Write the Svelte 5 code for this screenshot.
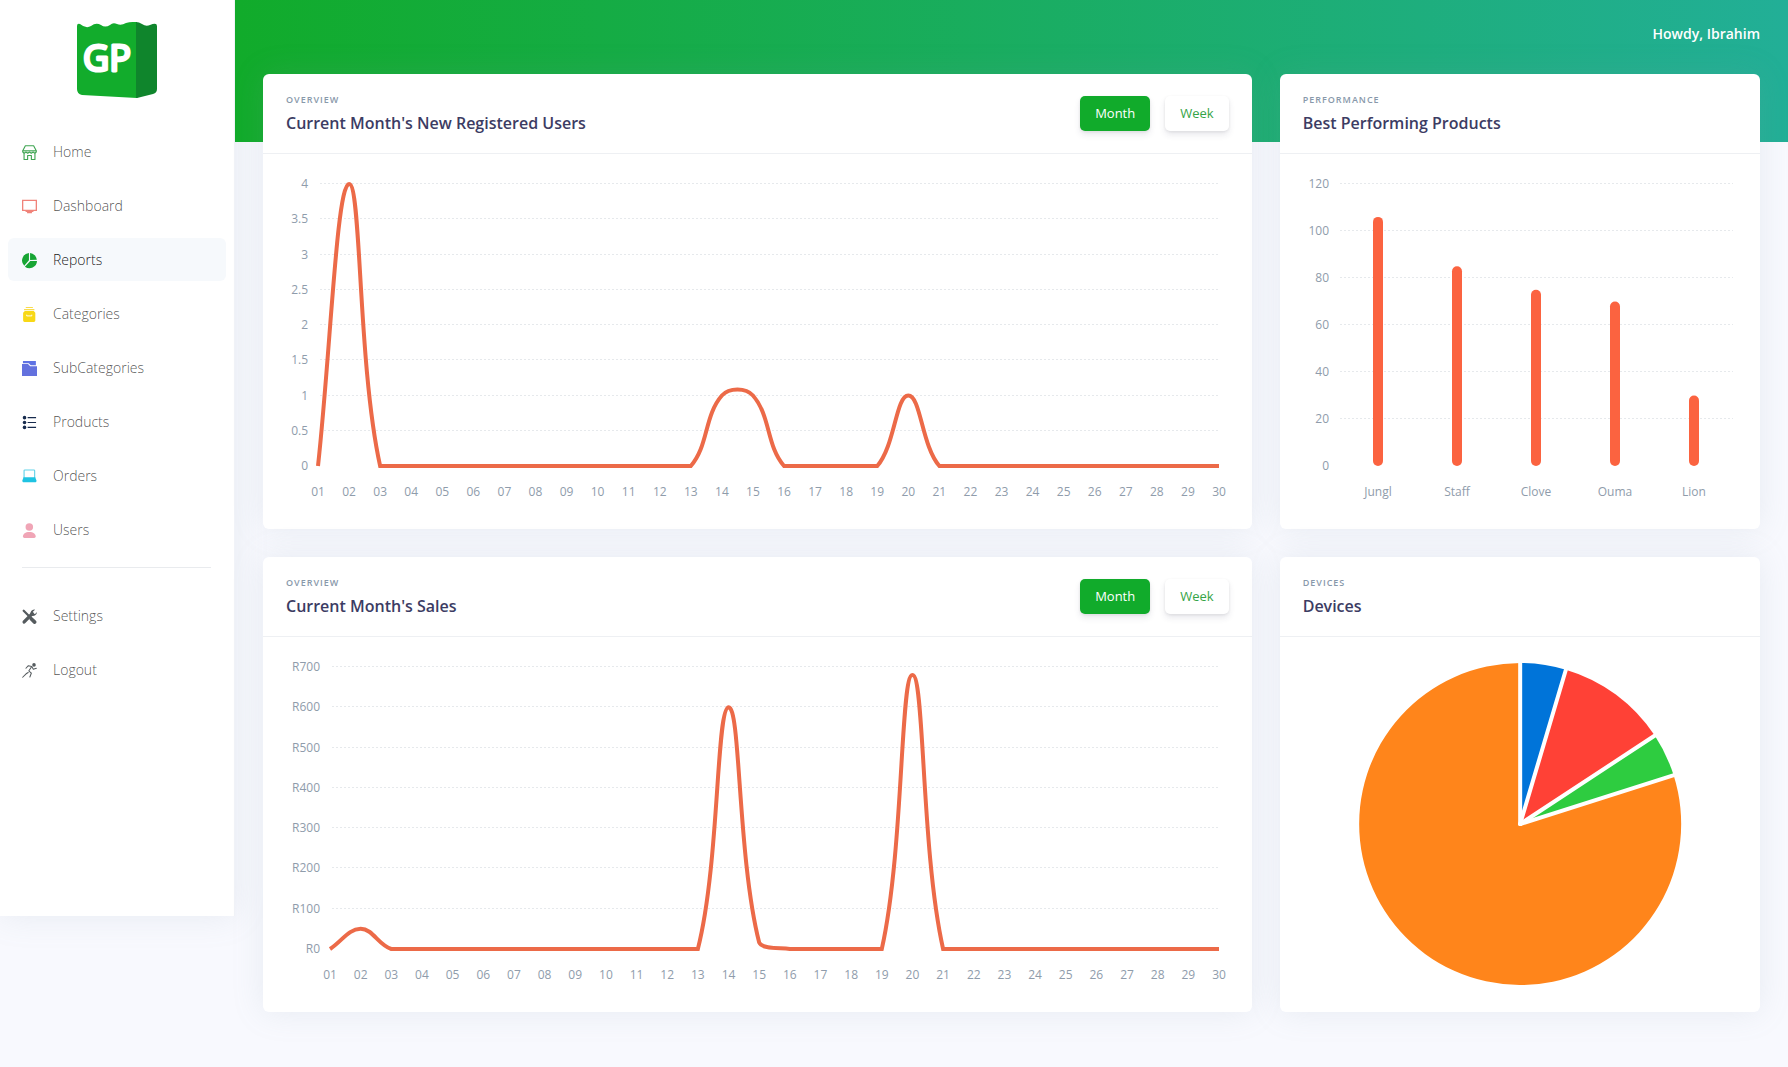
<script>
  const primaryLinks = [
    { label: 'Home', icon: 'shop' },
    { label: 'Dashboard', icon: 'screen' },
    { label: 'Reports', icon: 'pie', active: true },
    { label: 'Categories', icon: 'bag' },
    { label: 'SubCategories', icon: 'folder' },
    { label: 'Products', icon: 'list' },
    { label: 'Orders', icon: 'laptop' },
    { label: 'Users', icon: 'person' }
  ];
  const secondaryLinks = [
    { label: 'Settings', icon: 'tools' },
    { label: 'Logout', icon: 'runner' }
  ];

  const days = Array.from({ length: 30 }, (_, i) => String(i + 1).padStart(2, '0'));
  const series = (entries) => days.map((d) => entries[Number(d)] ?? 0);

  const lineCards = [
    {
      title: "Current Month's New Registered Users",
      values: series({ 2: 4, 14: 1, 15: 1, 20: 1 }),
      ticks: [0, 0.5, 1, 1.5, 2, 2.5, 3, 3.5, 4],
      prefix: '',
      left: 32
    },
    {
      title: "Current Month's Sales",
      values: series({ 2: 50, 14: 600, 15: 16, 20: 680 }),
      ticks: [0, 100, 200, 300, 400, 500, 600, 700],
      prefix: 'R',
      left: 44
    }
  ];

  const products = [
    { name: 'Jungl', value: 106 },
    { name: 'Staff', value: 85 },
    { name: 'Clove', value: 75 },
    { name: 'Ouma', value: 70 },
    { name: 'Lion', value: 30 }
  ];
  const productTicks = [0, 20, 40, 60, 80, 100, 120];

  const devices = [
    { color: '#0074d9', from: 0, to: 16.5 },
    { color: '#ff4136', from: 16.5, to: 56.7 },
    { color: '#2ecc40', from: 56.7, to: 72.4 },
    { color: '#ff851b', from: 72.4, to: 360 }
  ];

  const chartTop = 8;
  const chartBottom = 290;
  let lineWidths = $state([942, 942]);
  let barWidth = $state(434);
  let periods = $state(['Month', 'Month']);

  const scaleY = (value, max) => chartBottom - (value / max) * (chartBottom - chartTop);
  const tickY = (value, max) => Math.round(scaleY(value, max));
  const dayX = (index, left, width) => left + (index * (width - 10 - left)) / (days.length - 1);

  // Smooth cubic path; control points are kept inside the plot area.
  function smoothPath(values, max, left, width) {
    const pts = values.map((v, i) => ({ x: dayX(i, left, width), y: scaleY(v, max) }));
    const clamp = (y) => Math.min(chartBottom, Math.max(chartTop, y));
    const handles = pts.map((p, i) => {
      const a = pts[i - 1] ?? p;
      const b = pts[i + 1] ?? p;
      const da = Math.hypot(p.x - a.x, p.y - a.y);
      const db = Math.hypot(b.x - p.x, b.y - p.y);
      const fa = (0.4 * da) / (da + db);
      const fb = (0.4 * db) / (da + db);
      return {
        inX: p.x - fa * (b.x - a.x),
        inY: clamp(p.y - fa * (b.y - a.y)),
        outX: p.x + fb * (b.x - a.x),
        outY: clamp(p.y + fb * (b.y - a.y))
      };
    });
    return pts
      .map((p, i) =>
        i === 0
          ? `M${p.x} ${p.y}`
          : `C${handles[i - 1].outX} ${handles[i - 1].outY} ${handles[i].inX} ${handles[i].inY} ${p.x} ${p.y}`
      )
      .join('');
  }

  const polar = (deg, r) => {
    const a = (deg * Math.PI) / 180;
    return `${(r * Math.sin(a)).toFixed(2)} ${(-r * Math.cos(a)).toFixed(2)}`;
  };
  const slice = (s) =>
    `M0 0L${polar(s.from, 161)}A161 161 0 ${s.to - s.from > 180 ? 1 : 0} 1 ${polar(s.to, 161)}Z`;
</script>

{#snippet icon(name)}
  <svg class="icon" viewBox="0 0 16 16" aria-hidden="true">
    {#if name === 'shop'}
      <g fill="none" stroke="#3fa552" stroke-width="1.2" stroke-linejoin="round">
        <path d="M3.6.8h8.800l2.800 5.400v1.300l-1.500 1.300-1.900-1.300L9.900 8.800 8 7.500 6.100 8.800 4.200 7.500 2.300 8.800.8 7.500V6.200z" />
        <path d="M.8 6.200h14.400" />
        <path d="M2.200 8.800v6.600H6V11.200h4v4.200h3.800V8.800" />
      </g>
    {:else if name === 'screen'}
      <path d="M.7 1.400h14.600v10.800H.7z" fill="none" stroke="#f0837a" stroke-width="1.4" />
      <path d="M3.800 12.900h8.400v1h-1.600v1.200H5.400v-1.200H3.800z" fill="#f0837a" />
    {:else if name === 'pie'}
      <g fill="#17a534">
        <path d="M16 8.600A8 8 0 0 1 3.100 14.600L8.800 8.600z" />
        <path d="M7.400 0v7.700L2.400 13.600A8 8 0 0 1 7.400 0z" />
        <path d="M8.600 0A8 8 0 0 1 15.900 7.200L8.600 7.400z" />
      </g>
    {:else if name === 'bag'}
      <path d="M4 0h7.600v1H4zM2.200 2h11v1.400h-11z" fill="#f9dc4e" />
      <path d="M3 4.200h9.500L14.200 6v8.500a1.500 1.500 0 0 1-1.500 1.500h-10a1.500 1.500 0 0 1-1.500-1.500V6z" fill="#f8d816" />
      <path d="M5 8.200v1.300h5.400V8.200" fill="none" stroke="#fff" stroke-width="1" />
    {:else if name === 'folder'}
      <path d="M1 0h13.800v4.600H9.300L7.200 2.400H1z" fill="#5e72e4" />
      <path d="M0 3.200h6.400l2.400 2.400H16V16H0z" fill="#6371de" />
    {:else if name === 'list'}
      <g fill="#172b4d">
        <circle cx="2.700" cy="2.800" r="1.900" />
        <circle cx="2.700" cy="8" r="1.900" />
        <circle cx="2.700" cy="13.200" r="1.900" />
        <path d="M6 2.200h9v1.200H6zM6 7.400h9v1.200H6zM6 12.600h9v1.200H6z" />
      </g>
    {:else if name === 'laptop'}
      <path d="M2.200 9.500V1.800q0-.8.8-.8h9.700q.8 0 .8.800v7.700" fill="none" stroke="#62d3ea" stroke-width="1.200" />
      <path d="M1.600 8.800h12.500L15.300 12v1.200q0 .8-.8.800H1.300q-.8 0-.8-.8V12z" fill="#1fc3e2" />
    {:else if name === 'person'}
      <circle cx="7.800" cy="4.200" r="4" fill="#f0a5b6" />
      <path d="M1 14.500c0-3.200 2.600-5 6.800-5s6.800 1.800 6.800 5q0 1.500-1.500 1.500H2.500Q1 16 1 14.500z" fill="#f0a5b6" />
    {:else if name === 'tools'}
      <g fill="none" stroke="#555b5e" stroke-linecap="round">
        <path d="M1.800 1.800l4.800 4.900" stroke-width="2.400" />
        <path d="M9.800 10.400l3.700 3.500" stroke-width="4" />
        <path d="M11 5L2.300 13.800" stroke-width="3.600" />
      </g>
      <path d="M13.900.7L11.600 3l.4 1.900 1.900.4L16 3.200A4.200 4.200 0 0 1 9.300 6.600 4.200 4.200 0 0 1 13.900.7z" fill="#555b5e" />
    {:else}
      <circle cx="12.800" cy="2" r="1.900" fill="#555b5e" />
      <g fill="none" stroke="#555b5e" stroke-width="1.100" stroke-linecap="round" stroke-linejoin="round">
        <path d="M4.200 5.600l2.600-2.700 3.600.8L7.200 8.500l2.800 2.200-1.600 4.200" />
        <path d="M10.400 3.700l1.700 2.900 3.200-.9" />
        <path d="M6.600 10.200l-2.200 1.300L.7 15.200" />
      </g>
    {/if}
  </svg>
{/snippet}

{#snippet navList(links)}
  <ul class="links">
    {#each links as link}
      <li>
        <a href="#{link.label.toLowerCase()}" class:active={link.active} aria-current={link.active ? 'page' : undefined}>
          {@render icon(link.icon)}
          {link.label}
        </a>
      </li>
    {/each}
  </ul>
{/snippet}

{#snippet lineCard(card, n)}
  {@const max = card.ticks[card.ticks.length - 1]}
  {@const width = lineWidths[n]}
  <section class="card wide">
    <header class="card-head">
      <div>
        <h6>Overview</h6>
        <h2>{card.title}</h2>
      </div>
      <div class="periods">
        {#each ['Month', 'Week'] as period}
          <button
            type="button"
            class:selected={periods[n] === period}
            aria-pressed={periods[n] === period}
            onclick={() => (periods[n] = period)}>{period}</button>
        {/each}
      </div>
    </header>
    <div class="card-body">
      <div class="plot" bind:clientWidth={lineWidths[n]}>
        <svg class="chart" role="img" aria-label={card.title}>
          {#each card.ticks as tick}
            {#if tick > 0}
              <line class="grid" x1={card.left + 2} x2={width - 10} y1={tickY(tick, max) - 0.5} y2={tickY(tick, max) - 0.5} />
            {/if}
            <text class="tick end" x={card.left - 10} y={tickY(tick, max) + 4}>{card.prefix}{tick}</text>
          {/each}
          {#each days as day, i}
            <text class="tick middle" x={dayX(i, card.left, width)} y={chartBottom + 30}>{day}</text>
          {/each}
          <path class="line" d={smoothPath(card.values, max, card.left, width)} />
        </svg>
      </div>
    </div>
  </section>
{/snippet}

<div class="app">
  <nav class="sidebar" aria-label="Main">
    <a class="brand" href="#home" aria-label="GP">
      <svg viewBox="0 0 80 76">
        <path d="M0 4Q0 1 3 2Q9 7 14 4Q19 0 24 3Q28 6 33 3Q36 0 40 2Q44 4 49 1Q54-.3 60 0V76L5 73Q0 72 0 67z" fill="#12ac2c" />
        <path d="M59 0Q62 0 65 2Q69 5 73 3Q80 0 80 4V67Q80 71 76 72L62 75.500Q60 76 59 76z" fill="#0f852c" />
        <text x="30" y="49" text-anchor="middle">GP</text>
      </svg>
    </a>
    {@render navList(primaryLinks)}
    <hr />
    {@render navList(secondaryLinks)}
  </nav>

  <main>
    <header class="topbar"><span>Howdy, Ibrahim</span></header>
    <div class="cards">
      {@render lineCard(lineCards[0], 0)}

      <section class="card narrow">
        <header class="card-head">
          <div>
            <h6>Performance</h6>
            <h2>Best Performing Products</h2>
          </div>
        </header>
        <div class="card-body">
          <div class="plot" bind:clientWidth={barWidth}>
            <svg class="chart" role="img" aria-label="Best Performing Products">
              {#each productTicks as tick}
                {#if tick > 0}
                  <line class="grid" x1="37" x2={barWidth - 4} y1={tickY(tick, 120) - 0.5} y2={tickY(tick, 120) - 0.5} />
                {/if}
                <text class="tick end" x="26" y={tickY(tick, 120) + 4}>{tick}</text>
              {/each}
              {#each products as product, i}
                {@const x = Math.round(35 + ((i + 0.5) * (barWidth - 39)) / products.length)}
                <rect class="bar" x={x - 5} y={scaleY(product.value, 120)} width="10" height={chartBottom - scaleY(product.value, 120)} rx="5" />
                <text class="tick middle" {x} y={chartBottom + 30}>{product.name}</text>
              {/each}
            </svg>
          </div>
        </div>
      </section>

      {@render lineCard(lineCards[1], 1)}

      <section class="card narrow">
        <header class="card-head">
          <div>
            <h6>Devices</h6>
            <h2>Devices</h2>
          </div>
        </header>
        <div class="card-body">
          <svg class="chart" viewBox="-165 -165 330 330" role="img" aria-label="Devices">
            {#each devices as device}
              <path d={slice(device)} fill={device.color} />
            {/each}
            {#each devices as device}
              <path class="divider" d="M0 0L{polar(device.from, 163)}" />
            {/each}
          </svg>
        </div>
      </section>
    </div>
  </main>
</div>

<style>
  :global(body) {
    margin: 0;
    background: #f8f9fe;
    font-family: 'Open Sans', 'Noto Sans', sans-serif;
    color: #32325d;
  }

  .app {
    display: flex;
    align-items: flex-start;
    min-height: 100vh;
  }

  .sidebar {
    box-sizing: border-box;
    flex: 0 0 235px;
    min-height: calc(100vh - 151px);
    background: #fff;
    border-right: 1px solid #f1f3f8;
    box-shadow: 0 0 32px rgba(136, 152, 170, 0.15);
  }

  .brand {
    display: block;
    width: 80px;
    margin: 0 auto;
    padding: 22px 0 32px;
  }

  .brand svg {
    display: block;
    width: 80px;
    height: 76px;
  }

  .brand text {
    font-family: 'Open Sans', 'Noto Sans', sans-serif;
    font-size: 36px;
    font-weight: 400;
    fill: #fff;
    stroke: #fff;
    stroke-width: 3px;
    stroke-linejoin: round;
  }

  .links {
    display: flex;
    flex-direction: column;
    gap: 11px;
    margin: 0;
    padding: 0 8px;
    list-style: none;
  }

  .links a {
    display: flex;
    align-items: center;
    gap: 16px;
    height: 43px;
    padding: 0 14px;
    border-radius: 6px;
    font-size: 14px;
    font-weight: 300;
    color: rgba(0, 0, 0, 0.7);
    text-decoration: none;
  }

  .links a.active {
    background: #f6f9fc;
    color: rgba(0, 0, 0, 0.9);
  }

  .icon {
    flex: none;
    width: 15px;
    height: 15px;
    margin-top: 2px;
    overflow: visible;
  }

  hr {
    height: 1px;
    margin: 16px 23px 26px 22px;
    border: 0;
    background: #e9ebee;
  }

  main {
    flex: 1;
    min-width: 0;
    background: linear-gradient(87deg, #11ab2a, #22af97) no-repeat 0 0 / 100% 142px;
  }

  .topbar {
    display: flex;
    justify-content: flex-end;
    padding: 23px 28px 30px;
    font-size: 14px;
    line-height: 21px;
    font-weight: 600;
    color: #fff;
  }

  .cards {
    display: grid;
    grid-template-columns: repeat(12, minmax(0, 1fr));
    gap: 28px;
    padding: 0 28px 55px;
  }

  .card {
    border-radius: 6px;
    background: #fff;
    box-shadow: 0 0 32px rgba(136, 152, 170, 0.15);
  }

  .wide {
    grid-column: span 8;
  }

  .narrow {
    grid-column: span 4;
  }

  .card-head {
    display: flex;
    align-items: center;
    justify-content: space-between;
    box-sizing: border-box;
    height: 80px;
    padding: 0 23px;
    border-bottom: 1px solid #eef0f3;
  }

  h6 {
    margin: 0;
    font-size: 9px;
    line-height: 16px;
    font-weight: 600;
    letter-spacing: 1px;
    text-transform: uppercase;
    color: #8898aa;
  }

  h2 {
    margin: 0;
    padding-top: 3px;
    font-size: 16px;
    line-height: 24px;
    font-weight: 600;
    color: #3c3c63;
  }

  .periods {
    display: flex;
    gap: 15px;
  }

  button {
    height: 35px;
    padding: 0 15px 1px;
    border: 0;
    border-radius: 5px;
    background: #fff;
    box-shadow: 0 4px 6px rgba(50, 50, 93, 0.1), 0 1px 3px rgba(0, 0, 0, 0.08);
    font: 500 13px 'Open Sans', 'Noto Sans', sans-serif;
    color: #35a447;
    cursor: pointer;
  }

  button.selected {
    background: #11ab2b;
    color: #fff;
  }

  .card-body {
    padding: 22px 23px 23px;
  }

  .plot {
    min-width: 0;
  }

  .chart {
    display: block;
    width: 100%;
    height: 330px;
    overflow: visible;
  }

  .grid {
    stroke: #e6e9ec;
    stroke-width: 1px;
    stroke-dasharray: 2 2;
  }

  .tick {
    font-size: 12px;
    fill: #8f9cab;
  }

  .end {
    text-anchor: end;
  }

  .middle {
    text-anchor: middle;
  }

  .line {
    fill: none;
    stroke: #ec6a48;
    stroke-width: 4px;
  }

  .bar {
    fill: #fb6340;
  }

  .divider {
    stroke: #fff;
    stroke-width: 4px;
    stroke-linecap: round;
  }
</style>
